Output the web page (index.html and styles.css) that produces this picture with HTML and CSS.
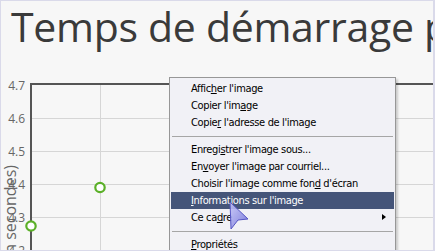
FILE: index.html
```html
<!DOCTYPE html>
<html lang="fr">
<head>
    <meta charset="utf-8" />
    <title>Temps de démarrage</title>
    <link rel="stylesheet" href="styles.css">
</head>
<body>
    <div class="page">
        <h1 class="title">Temps de démarrage par version</h1>

        <div class="chart">
            <div class="axis-title"><span>Temps (en secondes)</span></div>
            <div class="ticks">
                <span>4.7</span>
                <span>4.6</span>
                <span>4.5</span>
                <span>4.4</span>
                <span>4.3</span>
                <span>4.2</span>
            </div>
            <svg class="plot" width="403" height="168" viewBox="0 0 403 168">
                <g stroke="#d6d6d6" stroke-width="1">
                    <line x1="0" y1="35.5" x2="403" y2="35.5" />
                    <line x1="0" y1="68.5" x2="403" y2="68.5" />
                    <line x1="0" y1="101.5" x2="403" y2="101.5" />
                    <line x1="0" y1="134.5" x2="403" y2="134.5" />
                    <line x1="0" y1="167.5" x2="403" y2="167.5" />
                    <line x1="70.5" y1="0" x2="70.5" y2="168" />
                    <line x1="139.5" y1="0" x2="139.5" y2="168" />
                    <line x1="208.5" y1="0" x2="208.5" y2="168" />
                    <line x1="277.5" y1="0" x2="277.5" y2="168" />
                    <line x1="346.5" y1="0" x2="346.5" y2="168" />
                </g>
                <path d="M1 168 V1 H403" fill="none" stroke="#555" stroke-width="2" />
                <g fill="#fff" stroke="#5bb028" stroke-width="2.2">
                    <circle cx="70" cy="104.5" r="4.7" />
                    <circle cx="1" cy="143" r="4.7" />
                </g>
            </svg>
        </div>

        <div class="menu">
            <div class="item">Affic<u>h</u>er l'image</div>
            <div class="item">Copier l'im<u>a</u>ge</div>
            <div class="item">Copie<u>r</u> l'adresse de l'image</div>
            <div class="sep"></div>
            <div class="item">Enregi<u>s</u>trer l'image sous...</div>
            <div class="item">En<u>v</u>oyer l'image par courriel...</div>
            <div class="item">Choisir l'image comme fon<u>d</u> d'écran</div>
            <div class="item active"><u>I</u>nformations sur l'image</div>
            <div class="item">Ce ca<u>d</u>re<span class="arrow"></span></div>
            <div class="sep"></div>
            <div class="item"><u>P</u>ropriétés</div>
        </div>

        <svg class="cursor" width="24" height="36" viewBox="0 0 24 36">
            <defs>
                <linearGradient id="cur" x1="0" y1="0" x2="1" y2="1">
                    <stop offset="0" stop-color="#c8c8f8" />
                    <stop offset="1" stop-color="#7070d8" />
                </linearGradient>
            </defs>
            <path d="M3 5 L21 22 L11 23 L4 32 Z" fill="url(#cur)" fill-opacity="0.9"
                  stroke="#5656c4" stroke-width="1" stroke-linejoin="round" />
        </svg>
    </div>
</body>
</html>
```

FILE: styles.css
```css
body {
    margin: 0;
    font-family: "Open Sans", Arial, sans-serif;
    background: #f7f7f7;
}

.page {
    position: relative;
    height: 251px;
    box-sizing: border-box;
    border: 1px solid #dadaea;
    border-right-width: 2px;
    overflow: hidden;
    background: #f7f7f7;
}

.title {
    margin: 0;
    padding-left: 10px;
    font-size: 41px;
    font-weight: normal;
    letter-spacing: -0.3px;
    line-height: 50px;
    color: #3a3a3a;
    white-space: nowrap;
}

.chart {
    display: flex;
    margin-top: 32px;
}

.axis-title {
    width: 18px;
    margin-right: -18px;
}

.axis-title span {
    display: block;
    writing-mode: vertical-rl;
    transform: rotate(180deg);
    margin-top: 82px;
    font-size: 16px;
    line-height: 18px;
    color: #666;
    white-space: nowrap;
}

.ticks {
    width: 26px;
    margin-top: -14px;
    font-size: 12px;
    color: #666;
    text-align: right;
}

.ticks span {
    display: block;
    height: 33px;
    line-height: 33px;
}

.plot {
    flex: none;
    margin-left: 5px;
    overflow: visible;
}

.menu {
    position: absolute;
    left: 168px;
    top: 76px;
    width: 227px;
    box-sizing: border-box;
    border: 1px solid #979797;
    padding: 2px 1px;
    background: #f1f1f6;
    box-shadow: 2px 2px 2px rgba(0, 0, 0, 0.18);
    font-family: "DejaVu Sans Condensed", "Liberation Sans", sans-serif;
    font-size: 11px;
    letter-spacing: -0.35px;
    color: #000;
}

.item {
    position: relative;
    height: 17px;
    line-height: 17px;
    padding-left: 20px;
    white-space: nowrap;
}

.item.active {
    background: #455579;
    color: #fff;
}

.sep {
    height: 10px;
    padding-top: 5px;
    box-sizing: border-box;
}

.sep::before {
    content: "";
    display: block;
    margin: 0 1px;
    border-top: 1px solid #a6a6a6;
}

.arrow {
    position: absolute;
    right: 8px;
    top: 5px;
    border-top: 3px solid transparent;
    border-bottom: 3px solid transparent;
    border-left: 4px solid #000;
}

.cursor {
    position: absolute;
    left: 226px;
    top: 196px;
}
```
